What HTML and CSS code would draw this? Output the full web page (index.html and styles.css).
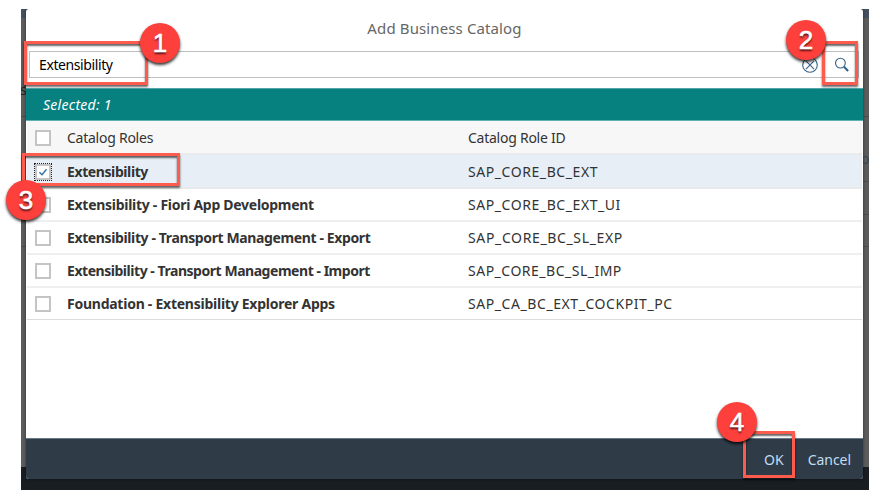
FILE: index.html
```html
<!DOCTYPE html>
<html lang="en">
<head>
<meta charset="utf-8">
<title>Add Business Catalog</title>
<link rel="stylesheet" href="styles.css">
</head>
<body>
<main class="page">
  <span class="behind behind-left">s</span>
  <span class="behind behind-right">ou</span>
  <i class="rule rule-a"></i><i class="rule rule-b"></i><i class="rule rule-c"></i><i class="rule rule-d"></i>
  <section class="dialog">
    <h1 class="title"><span>Add Business Catalog</span></h1>
    <div class="search">
      <span class="query">Extensibility</span>
      <svg class="clear" viewBox="0 0 18 18"><circle cx="9" cy="9" r="7.3"/><path d="M4.9 4.9l8.2 8.2M13.1 4.9l-8.2 8.2"/></svg>
      <svg class="find" viewBox="0 0 16 16"><circle cx="6.4" cy="6.1" r="4.9"/><path class="handle" d="M10 9.8l4.1 4.2"/></svg>
    </div>
    <div class="selected"><span>Selected: 1</span></div>
    <div class="table">
      <div class="row head"><i class="box"></i><span class="name">Catalog Roles</span><span class="id">Catalog Role ID</span></div>
      <div class="row active"><i class="box checked"><svg viewBox="0 0 12 12"><path d="M2.4 6.2l2.6 2.6 4.5-5.6"/></svg></i><b class="name">Extensibility</b><span class="id">SAP_CORE_BC_EXT</span></div>
      <div class="row fiori"><i class="box"></i><b class="name">Extensibility - Fiori App Development</b><span class="id">SAP_CORE_BC_EXT_UI</span></div>
      <div class="row export"><i class="box"></i><b class="name">Extensibility - Transport Management - Export</b><span class="id">SAP_CORE_BC_SL_EXP</span></div>
      <div class="row import"><i class="box"></i><b class="name">Extensibility - Transport Management - Import</b><span class="id">SAP_CORE_BC_SL_IMP</span></div>
      <div class="row last"><i class="box"></i><b class="name">Foundation - Extensibility Explorer Apps</b><span class="id">SAP_CA_BC_EXT_COCKPIT_PC</span></div>
    </div>
    <footer class="footer"><span class="ok">OK</span><span class="cancel">Cancel</span></footer>
  </section>
</main>
<div class="mark mark-1"></div><div class="mark mark-2"></div><div class="mark mark-3"></div><div class="mark mark-4"></div>
<div class="badge badge-1">1</div><div class="badge badge-2">2</div><div class="badge badge-3">3</div><div class="badge badge-4">4</div>
</body>
</html>
```
FILE: styles.css
```css
* { box-sizing: border-box; }
body {
  margin: 0;
  width: 869px;
  height: 490px;
  padding: 9px 0 0 21px;
  overflow: hidden;
  position: relative;
  background: #fff;
  font: 14px/20px "Noto Sans", sans-serif;
  color: #333;
}
.page {
  position: relative;
  height: 481px;
  padding: 0 6px 0 5px;
  overflow: hidden;
  background: linear-gradient(#45515e 0 9px, #5c5c5c 9px 458px, #191e23 458px);
}
.behind { position: absolute; font-size: 14px; line-height: 16px; }
.behind-left { left: -1px; top: 73px; color: #222; }
.behind-right { left: 840px; top: 142px; color: #3c4855; }
.rule { position: absolute; left: 0; right: 0; height: 1px; background: #4c4c4c; }
.rule-a { top: 107px; }
.rule-b { top: 172px; }
.rule-c { top: 205px; }
.rule-d { top: 237px; }
.dialog {
  position: relative;
  display: flex;
  flex-direction: column;
  width: 837px;
  height: 470px;
  background: #fff;
  border-radius: 3px;
  overflow: hidden;
  box-shadow: 0 0 3px rgba(0, 0, 0, .5);
}
.title {
  margin: 0;
  height: 42px;
  padding-top: 9px;
  text-align: center;
  font-size: 15px;
  font-weight: 400;
  letter-spacing: .12px;
  color: #666;
}
.search {
  display: flex;
  align-items: center;
  height: 27px;
  margin: 0 4px 10px 3px;
  padding: 0 8px 0 9px;
  border: 1px solid #bfbfbf;
  color: #000;
}
.query { flex: 1; letter-spacing: -.4px; }
.search svg { fill: none; stroke: #346187; stroke-width: 1.1; }
.clear { width: 18px; height: 18px; margin-right: 15px; }
.find { width: 16px; height: 16px; }
.search .handle { stroke-width: 2; }
.selected {
  height: 33px;
  padding: 6px 0 0 17px;
  background: #07817f;
  border-bottom: 1px solid #5fb0b2;
  border-top: 1px solid #53a6a5;
  color: #fff;
  font-style: italic;
  letter-spacing: .28px;
}
.selected span { display: block; line-height: 19px; }
.table { margin: 0 1px; }
.row {
  display: grid;
  grid-template-columns: 32px 401px 1fr;
  align-items: center;
  height: 33px;
  padding-left: 8px;
  border-bottom: 2px solid #efefef;
}
.name, .id { white-space: nowrap; }
.id { letter-spacing: .57px; }
.head { height: 34px; padding-top: 2px; background: #f7f7f7; border-color: #e9ebed; }
.head .name, .head .id { letter-spacing: -.25px; }
.active { height: 34px; padding-top: 2px; background: #e7eef6; border-color: #e8e9ea; }
.active .name { letter-spacing: -.4px; }
.fiori .name { letter-spacing: -.28px; }
.export .name { letter-spacing: -.38px; }
.export .id { letter-spacing: .64px; }
.import .name { letter-spacing: -.46px; }
.import .id { letter-spacing: .5px; }
.last { height: 32px; border-bottom: 1px solid #dcdcdc; }
.last .name { letter-spacing: -.25px; }
.box { display: block; width: 16px; height: 16px; border: 2px solid #c4c4c4; background: #fff; }
.checked { position: relative; outline: 1px dotted #222; }
.checked svg { position: absolute; left: 0; top: 0; width: 12px; height: 12px; fill: none; stroke: #2e72ab; stroke-width: 1.4; }
.footer {
  display: flex;
  align-items: center;
  justify-content: flex-end;
  gap: 24px;
  height: 41px;
  margin-top: auto;
  padding: 2px 12px 0 0;
  background: #2f3c48;
  border-top: 1px solid #697886;
  color: #c1dcf3;
}
.cancel { letter-spacing: -.05px; }
.mark { position: absolute; border: 3px solid #fc5b4d; box-shadow: 0 2px 2px rgba(0, 0, 0, .6), inset 0 2px 2px rgba(0, 0, 0, .6); }
.mark-1 { left: 24px; top: 41px; width: 124px; height: 44px; }
.mark-2 { left: 822px; top: 41px; width: 36px; height: 44px; }
.mark-3 { left: 22px; top: 153px; width: 158px; height: 33px; }
.mark-4 { left: 743px; top: 431px; width: 52px; height: 47px; }
.badge {
  position: absolute;
  width: 40px;
  height: 40px;
  border-radius: 50%;
  background: #fd403b;
  box-shadow: 0 2px 3px rgba(0, 0, 0, .8);
  color: #fff;
  font: 26px/40px "Liberation Sans", sans-serif;
  -webkit-text-stroke: .6px #fff;
  text-align: center;
  text-shadow: 0 2px 2px rgba(0, 0, 0, .7);
}
.badge-1 { left: 140px; top: 23px; }
.badge-2 { left: 786px; top: 20px; }
.badge-3 { left: 6px; top: 180px; }
.badge-4 { left: 717px; top: 402px; }
```
